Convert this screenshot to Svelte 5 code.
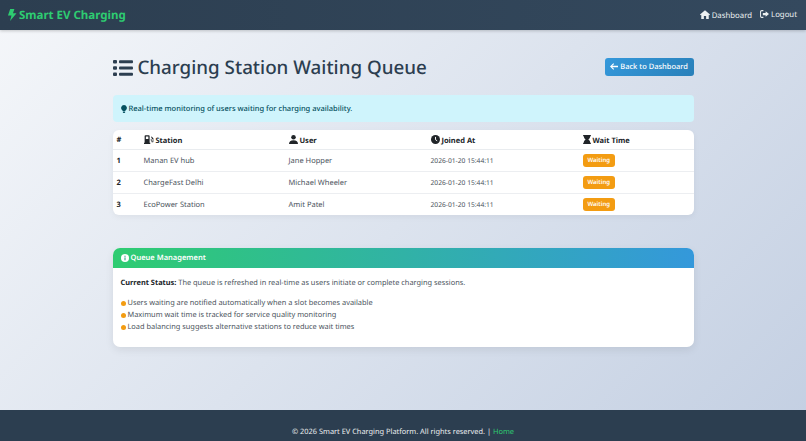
<script>
  const rows = [
    { n: 1, station: 'Manan EV hub', user: 'Jane Hopper', joined: '2026-01-20 15:44:11' },
    { n: 2, station: 'ChargeFast Delhi', user: 'Michael Wheeler', joined: '2026-01-20 15:44:11' },
    { n: 3, station: 'EcoPower Station', user: 'Amit Patel', joined: '2026-01-20 15:44:11' }
  ];
  const notes = [
    'Users waiting are notified automatically when a slot becomes available',
    'Maximum wait time is tracked for service quality monitoring',
    'Load balancing suggests alternative stations to reduce wait times'
  ];
</script>

<div class="page">
  <nav class="navbar">
    <a class="brand" href="#home">
      <svg class="bolt" viewBox="0 0 12 16"><path d="M3.6 0h5.6L7.3 5.6H12L3.4 16l1.9-7.4H.6z" fill="currentColor" /></svg>
      Smart EV Charging
    </a>
    <div class="links">
      <a href="#dash">
        <svg viewBox="0 0 16 14" width="10" height="9"><path d="M8 0l8 7-1 1.100-1-.8V14H9.800V9.500H6.200V14H2V7.300l-1 .8L0 7z" fill="currentColor" /></svg>
        Dashboard
      </a>
      <a href="#logout">
        <svg viewBox="0 0 16 14" width="9" height="8"><path d="M6 1H3a2 2 0 0 0-2 2v8a2 2 0 0 0 2 2h3" fill="none" stroke="currentColor" stroke-width="1.800" /><path d="M10 2l6 5-6 5V9H5V5h5z" fill="currentColor" /></svg>
        Logout
      </a>
    </div>
  </nav>

  <main class="main">
    <header class="head">
      <h1>
        <svg class="list" viewBox="0 0 20 16" width="20" height="16">
          <rect x="0" y="0" width="4" height="3.600" rx="1" /><rect x="6" y="0.300" width="14" height="3" rx="1" />
          <rect x="0" y="6.200" width="4" height="3.600" rx="1" /><rect x="6" y="6.500" width="14" height="3" rx="1" />
          <rect x="0" y="12.400" width="4" height="3.600" rx="1" /><rect x="6" y="12.700" width="14" height="3" rx="1" />
        </svg>
        Charging Station Waiting Queue
      </h1>
      <a class="back" href="#dash">
        <svg viewBox="0 0 12 10" width="8" height="7"><path d="M5 0l1.200 1.200L3.300 4H12v2H3.300l2.900 2.800L5 10 0 5z" fill="currentColor" /></svg>
        Back to Dashboard
      </a>
    </header>

    <div class="alert">
      <svg viewBox="0 0 10 14" width="6" height="8"><path d="M5 0a5 5 0 0 1 3 9c-.5.4-.8 1-.8 1.500H2.800c0-.5-.3-1.100-.8-1.500A5 5 0 0 1 5 0zM3 11.300h4V13l-1 1H4l-1-1z" fill="currentColor" /></svg>
      Real-time monitoring of users waiting for charging availability.
    </div>

    <div class="table-card">
      <table>
        <thead>
          <tr>
            <th class="c-n">#</th>
            <th class="c-s">
              <svg viewBox="0 0 16 14" width="10" height="9"><path d="M1 1.500A1.500 1.500 0 0 1 2.500 0h5A1.500 1.500 0 0 1 9 1.500V12h1v2H0v-2h1zM3 2v4h4V2z" fill="currentColor" /><path d="M11 3l1-1 3 3v5a1.500 1.500 0 0 1-3 0V8h-1.500V7H13v3h1V6h-1.500V4.500z" fill="currentColor" /></svg>
              Station
            </th>
            <th class="c-u">
              <svg viewBox="0 0 14 14" width="9" height="9"><circle cx="7" cy="3.500" r="3.500" fill="currentColor" /><path d="M0 14c0-4 2.500-6 7-6s7 2 7 6z" fill="currentColor" /></svg>
              User
            </th>
            <th class="c-j">
              <svg viewBox="0 0 14 14" width="9" height="9"><circle cx="7" cy="7" r="7" fill="currentColor" /><path d="M7 3v4.300l2.600 1.700" fill="none" stroke="#fff" stroke-width="1.500" /></svg>
              Joined At
            </th>
            <th>
              <svg viewBox="0 0 12 14" width="8" height="9"><path d="M0 0h12v2h-1c0 2.500-1.500 4-3 5 1.500 1 3 2.500 3 5h1v2H0v-2h1c0-2.500 1.500-4 3-5-1.500-1-3-2.500-3-5H0z" fill="currentColor" /></svg>
              Wait Time
            </th>
          </tr>
        </thead>
        <tbody>
          {#each rows as row}
            <tr>
              <td class="num">{row.n}</td>
              <td class="txt">{row.station}</td>
              <td class="txt">{row.user}</td>
              <td class="time">{row.joined}</td>
              <td><span class="badge">Waiting</span></td>
            </tr>
          {/each}
        </tbody>
      </table>
    </div>

    <section class="card">
      <div class="card-head">
        <svg viewBox="0 0 14 14" width="8" height="8"><circle cx="7" cy="7" r="7" fill="#fff" /><rect x="6" y="6" width="2" height="5" fill="#35a98f" /><rect x="6" y="3" width="2" height="2" fill="#35a98f" /></svg>
        Queue Management
      </div>
      <div class="card-body">
        <p><strong>Current Status:</strong> The queue is refreshed in real-time as users initiate or complete charging sessions.</p>
        <ul>
          {#each notes as note}
            <li><span class="dot"></span>{note}</li>
          {/each}
        </ul>
      </div>
    </section>
  </main>

  <footer class="footer">
    © 2026 Smart EV Charging Platform. All rights reserved. | <a href="#home">Home</a>
  </footer>
</div>

<style>
  :global(body) {
    margin: 0;
    font-family: "Noto Sans", "Open Sans", sans-serif;
    text-rendering: geometricPrecision;
  }
  a {
    text-decoration: none;
    color: inherit;
  }
  svg {
    vertical-align: -1px;
  }
  .page {
    min-height: 441px;
    display: flex;
    flex-direction: column;
    background: linear-gradient(135deg, #f5f7fa 0%, #c3cfe2 100%);
  }
  .navbar {
    height: 30px;
    box-sizing: border-box;
    padding: 0 9px 0 7px;
    display: flex;
    align-items: center;
    justify-content: space-between;
    background: linear-gradient(90deg, #2c3e50, #34495e);
    box-shadow: 0 1px 3px rgba(0, 0, 0, 0.2);
  }
  .brand {
    font-size: 11.500px;
    font-weight: 700;
    color: #2ecc71;
    display: flex;
    align-items: center;
    gap: 2px;
  }
  .bolt {
    width: 10px;
    height: 12px;
  }
  .links {
    display: flex;
    gap: 8px;
    font-size: 7.800px;
    color: #ecf0f1;
  }
  .main {
    flex: 1;
    width: 581px;
    margin: 0 auto;
    padding-top: 25px;
  }
  .head {
    display: flex;
    align-items: center;
    justify-content: space-between;
    height: 24px;
    margin-bottom: 16px;
  }
  h1 {
    margin: 0;
    font-size: 18.800px;
    font-weight: 500;
    color: #2c3e50;
    white-space: nowrap;
  }
  .list {
    fill: #2c3e50;
    vertical-align: -2px;
  }
  .back {
    font-size: 7.500px;
    font-weight: 500;
    color: #fff;
    background: linear-gradient(135deg, #3498db, #2980b9);
    padding: 0 5.500px;
    height: 18px;
    line-height: 18px;
    border-radius: 3px;
  }
  .alert {
    height: 27px;
    box-sizing: border-box;
    padding: 0 0 0 8px;
    display: flex;
    align-items: center;
    gap: 2px;
    font-size: 7.500px;
    font-weight: 500;
    color: #055160;
    background: #cff4fc;
    border-radius: 4px;
    margin-bottom: 8px;
  }
  .table-card {
    background: #fff;
    border-radius: 6px;
    box-shadow: 0 2px 6px rgba(0, 0, 0, 0.05);
    overflow: hidden;
    margin-bottom: 33px;
  }
  table {
    width: 100%;
    border-collapse: collapse;
    table-layout: fixed;
    font-size: 7.500px;
    color: #4b535c;
  }
  th {
    box-sizing: border-box;
    height: 19px;
    padding: 2px 0 0 4px;
    text-align: left;
    font-weight: 700;
    color: #212529;
    border-bottom: 1px solid #e9ecef;
  }
  td {
    height: 21px;
    padding: 0 0 0 4px;
    border-bottom: 1px solid #eceef1;
  }
  td.txt,
  td.num {
    height: 19px;
    padding-top: 2px;
  }
  tr:last-child td {
    border-bottom: 0;
  }
  .c-n {
    width: 27px;
  }
  .c-s {
    width: 145px;
  }
  .c-u {
    width: 142px;
  }
  .c-j {
    width: 152px;
  }
  .num {
    font-weight: 700;
    color: #212529;
  }
  .time {
    font-size: 6.700px;
  }
  .badge {
    display: inline-block;
    font-size: 6px;
    font-weight: 600;
    color: #fff;
    background: #f39c12;
    border-radius: 3px;
    padding: 0 5px;
    height: 13px;
    line-height: 13px;
    vertical-align: middle;
  }
  .card {
    background: #fff;
    border-radius: 7px;
    overflow: hidden;
    box-shadow: 0 3px 8px rgba(0, 0, 0, 0.08);
  }
  .card-head {
    height: 20px;
    box-sizing: border-box;
    padding: 1px 0 0 8px;
    display: flex;
    align-items: center;
    gap: 2px;
    font-size: 7.500px;
    font-weight: 600;
    color: #fff;
    background: linear-gradient(90deg, #2ecc71, #3498db);
  }
  .card-body {
    padding: 9px 8px 14px;
    font-size: 7.400px;
    line-height: 12px;
    color: #4b535c;
  }
  .card-body p {
    margin: 0 0 8px;
  }
  .card-body strong {
    color: #212529;
  }
  ul {
    list-style: none;
    margin: 0;
    padding: 0;
  }
  .dot {
    display: inline-block;
    width: 5px;
    height: 5px;
    margin-right: 2px;
    border-radius: 50%;
    background: #f39c12;
    vertical-align: -1px;
  }
  .footer {
    height: 31px;
    box-sizing: border-box;
    padding-top: 13px;
    text-align: center;
    font-size: 7.400px;
    line-height: 18px;
    color: #ecf0f1;
    background: #2c3e50;
  }
  .footer a {
    color: #2ecc71;
  }
</style>
